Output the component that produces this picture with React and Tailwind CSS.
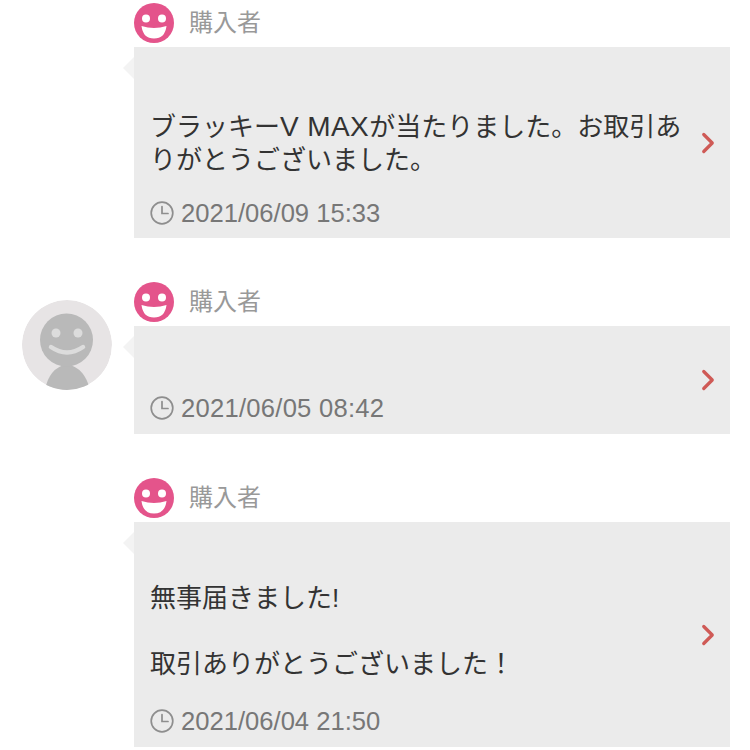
import { ChevronRight } from 'lucide-react'

const font = "font-['Liberation_Sans','Noto_Sans_CJK_JP',sans-serif]"

const comments = [
  {
    id: 1,
    date: '2021/06/09 15:33',
    lines: [
      <>ブラッキー<span className="text-[28px] tracking-[0.4px]">V MAX</span>が当たりました。お取引あ</>,
      'りがとうございました。',
    ],
    bubble: 'h-[191px]',
    text: 'pt-[63px]',
    dateGap: 'mt-[21px]',
    outer: 'mt-[3px]',
  },
  {
    id: 2,
    date: '2021/06/05 08:42',
    dateClass: 'tracking-[0.25px]',
    lines: [],
    bubble: 'h-[108px]',
    text: 'pt-[67px]',
    dateGap: 'mt-0',
    outer: 'mt-[44px]',
    avatar: true,
  },
  {
    id: 3,
    date: '2021/06/04 21:50',
    lines: ['無事届きました!', '\u00a0', '取引ありがとうございました！'],
    bubble: 'h-[225px]',
    text: 'pt-[60px]',
    dateGap: 'mt-[25px]',
    outer: 'mt-[44px]',
  },
]

function PinkFace() {
  return (
    <svg viewBox="0 0 40 40" className="w-10 h-10 shrink-0">
      <circle cx="20" cy="20" r="20" fill="#e4548b" />
      <circle cx="12" cy="15.500" r="4" fill="#fff" />
      <circle cx="28" cy="15.500" r="4" fill="#fff" />
      <path d="M7.500 23 Q20 27 32.500 23 Q31 35.500 20 35.500 Q9 35.500 7.500 23Z" fill="#fff" />
    </svg>
  )
}

function GrayAvatar() {
  return (
    <svg viewBox="0 0 90 90" className="w-[90px] h-[90px] shrink-0 mt-[18px] rounded-full">
      <circle cx="45" cy="45" r="45" fill="#e7e4e5" />
      <path d="M23 90 Q27 68 45 64 Q63 68 68 90Z" fill="#b9b9b9" />
      <circle cx="44.500" cy="40" r="26.500" fill="#b9b9b9" />
      <circle cx="34" cy="33" r="4.500" fill="#dcdcdc" />
      <circle cx="56" cy="33" r="4.500" fill="#dcdcdc" />
      <path d="M29 47 Q45 58 61 47" fill="none" stroke="#dcdcdc" strokeWidth="4.500" strokeLinecap="round" />
    </svg>
  )
}

function ClockIcon() {
  return (
    <svg viewBox="0 0 24 24" className="w-6 h-6 shrink-0" fill="none" stroke="#8e8e8e" strokeWidth="1.700">
      <circle cx="12" cy="12" r="10.800" />
      <path d="M12 5.500V12.500H18" strokeLinecap="round" />
    </svg>
  )
}

function Comment({ item }) {
  return (
    <div className={`flex pl-[22px] pr-5 gap-[22px] ${item.outer}`}>
      <div className="w-[90px] shrink-0 flex justify-center items-start">
        {item.avatar && <GrayAvatar />}
      </div>
      <div className="flex-1 min-w-0">
        <div className="flex items-center gap-[15px] h-10">
          <PinkFace />
          <span className="text-[24px] leading-[42px] text-[#999999]">購入者</span>
        </div>
        <div className={`relative mt-1 bg-[#ebebeb] flex items-center ${item.bubble}`}>
          <div className="absolute left-[-11px] top-[10px] w-0 h-0 border-y-[11px] border-y-transparent border-r-[11px] border-r-[#f3f3f3]" />
          <div className={`flex-1 self-start pl-[16px] ${item.text}`}>
            {item.lines.map((line, i) => (
              <p key={i} className="text-[26px] leading-[33px] text-[#333333] whitespace-nowrap">{line}</p>
            ))}
            <div className={`flex items-center gap-[7px] h-[30px] ${item.dateGap}`}>
              <ClockIcon />
              <span className={`text-[25.6px] leading-[30px] text-[#777777] ${item.dateClass || ''}`}>{item.date}</span>
            </div>
          </div>
          <ChevronRight className="w-[34px] h-[34px] text-[#cf5a56] mr-[5px] shrink-0" strokeWidth={2.3} />
        </div>
      </div>
    </div>
  )
}

export default function App() {
  return (
    <div className={`w-[750px] h-[750px] overflow-hidden bg-white ${font}`}>
      {comments.map(item => (
        <Comment key={item.id} item={item} />
      ))}
    </div>
  )
}
